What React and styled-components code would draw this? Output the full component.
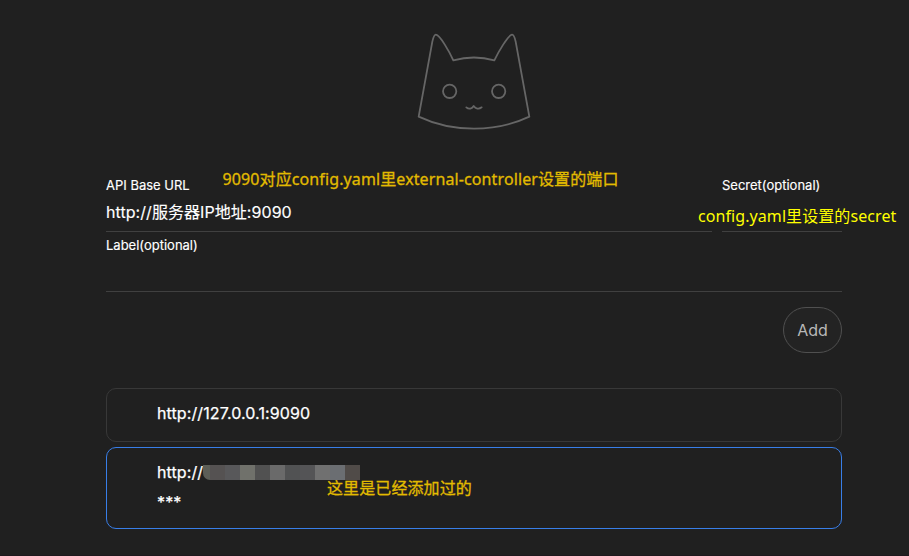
import React from "react";
import styled, { createGlobalStyle } from "styled-components";

const GlobalStyle = createGlobalStyle`
  *, *::before, *::after { box-sizing: border-box; }
  body { margin: 0; background: #202020; overflow: hidden; }
`;

const Page = styled.div`
  position: relative;
  height: 556px;
  padding: 20px 67px 0 106px;
  background: #202020;
  border-bottom: 1px solid #1f191e;
  color: #fff;
  font-family: Inter, "Noto Sans CJK SC", sans-serif;
  font-size: 16px;
`;

const Header = styled.header`
  display: flex;
  justify-content: center;
  height: 154px;
`;

const Logo = styled.svg`
  width: 140px;
  height: 120px;
  fill: none;
  stroke: #666;
  stroke-width: 5.4;
  stroke-linecap: round;
  stroke-linejoin: round;
`;

const Fields = styled.div`
  display: grid;
  grid-template-columns: 606px 120px;
  column-gap: 10px;
`;

const Field = styled.label`
  display: flex;
  flex-direction: column;
  height: ${(p) => (p.$wide ? 60 : 58)}px;
  grid-column: ${(p) => (p.$wide ? "1 / -1" : "auto")};
  padding-top: ${(p) => (p.$wide ? 4 : 2)}px;
  border-bottom: 1px solid #404040;
`;

const FieldName = styled.span`
  font-size: 13px;
  line-height: 18px;
  -webkit-text-stroke: 0.15px currentColor;
`;

const FieldValue = styled.span`
  margin-top: 5px;
  line-height: 26px;
  letter-spacing: 0.06px;
  -webkit-text-stroke: 0.15px currentColor;
  white-space: nowrap;
`;

const Actions = styled.div`
  display: flex;
  justify-content: flex-end;
  padding-top: 15px;
  height: 96px;
`;

const AddButton = styled.button`
  width: 59px;
  height: 46px;
  padding: 0;
  border: 1px solid #505050;
  border-radius: 23px;
  background: #232323;
  color: #b8b8b8;
  font: inherit;
`;

const Backends = styled.div`
  display: grid;
  grid-template-rows: 54px 82px;
  row-gap: 5px;
`;

const Backend = styled.div`
  padding: 9px 50px;
  border: 1px solid ${(p) => (p.$selected ? "#387ee8" : "#383838")};
  border-radius: 10px;
  letter-spacing: 0.11px;
  -webkit-text-stroke: 0.25px currentColor;
`;

const Line = styled.div`
  display: flex;
  align-items: center;
  height: 30px;
  line-height: 30px;
`;

const Address = styled.span`
  width: 46px;
  white-space: nowrap;
`;

const Mosaic = styled.span`
  display: flex;
  width: 157px;
  height: 15px;
  border-bottom-left-radius: 7px;
  overflow: hidden;
`;

const Block = styled.span`
  flex: 0 0 ${(p) => p.$w || 15}px;
  background: ${(p) => p.$color};
`;

const Note = styled.div`
  position: absolute;
  left: ${(p) => p.$x}px;
  top: ${(p) => p.$y}px;
  color: ${(p) => p.$color || "#e2bb00"};
  font-family: "Noto Sans", "Noto Sans CJK SC", sans-serif;
  font-size: 16px;
  line-height: 24px;
  letter-spacing: ${(p) => p.$spacing || 0}px;
  -webkit-text-stroke: ${(p) => (p.$color ? 0 : 0.3)}px currentColor;
  white-space: nowrap;
`;

const blocks = ["#555252", "#58585a", "#70716b", "#515151", "#6a6a6a", "#515253", "#545456", "#707070", "#6b6e72", "#504b48"];

function CatLogo() {
  return (
    <Logo viewBox="0 0 420 360">
      <path d="M44 290L85 65Q90 43 96 44C108 45 137 97 148 121Q210 104 271 121C283 96 312 46 324 44Q330 43 335 65L376 290Q300 326 210 326Q120 326 44 290Z" />
      <circle cx="137" cy="214" r="20" />
      <circle cx="284" cy="214" r="20" />
      <path d="M187 262C195 269 204 266 209 258C215 266 224 269 233 262" />
    </Logo>
  );
}

export default function App() {
  return (
    <>
      <GlobalStyle />
      <Page>
        <Header><CatLogo /></Header>
        <Fields>
          <Field>
            <FieldName>API Base URL</FieldName>
            <FieldValue>http://服务器IP地址:9090</FieldValue>
          </Field>
          <Field>
            <FieldName>Secret(optional)</FieldName>
          </Field>
          <Field $wide>
            <FieldName>Label(optional)</FieldName>
          </Field>
        </Fields>
        <Actions><AddButton>Add</AddButton></Actions>
        <Backends>
          <Backend><Line>http://127.0.0.1:9090</Line></Backend>
          <Backend $selected>
            <Line>
              <Address>http://</Address>
              <Mosaic>
                <Block $w={7} $color="#5c5e57" />
                {blocks.map((color, i) => <Block key={i} $color={color} />)}
              </Mosaic>
            </Line>
            <Line>***</Line>
          </Backend>
        </Backends>
        <Note $x={222.5} $y={167} $spacing={0.11}>9090对应config.yaml里external-controller设置的端口</Note>
        <Note $x={698} $y={204} $spacing={0.08} $color="#ffff00">config.yaml里设置的secret</Note>
        <Note $x={327} $y={476} $spacing={0.1}>这里是已经添加过的</Note>
      </Page>
    </>
  );
}
